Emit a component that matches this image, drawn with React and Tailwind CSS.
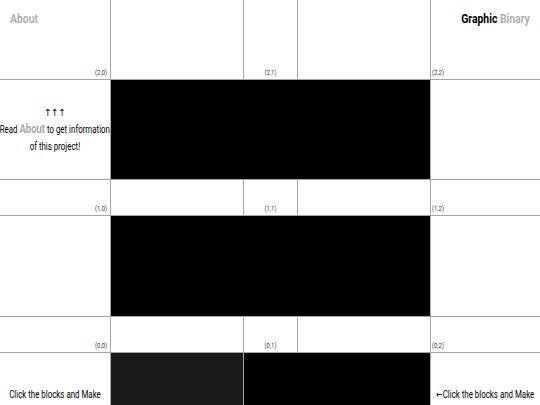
import React from 'react'

const FONT = { fontFamily: 'Roboto, "Liberation Sans", sans-serif' }
const ARROW = { fontFamily: '"DejaVu Sans", sans-serif' }

function Label({ text, align }) {
  const pos = align === 'right' ? 'justify-end pr-[3px]' : align === 'left' ? 'justify-start pl-px' : 'justify-center'
  const origin = align === 'right' ? 'origin-right' : align === 'left' ? 'origin-left' : 'origin-center'
  return (
    <div className={`flex items-end h-full pb-[3px] ${pos}`}>
      <span className={`inline-block scale-x-[0.8] ${origin} text-[7.5px] leading-none text-[#3a3a3a]`}>{text}</span>
    </div>
  )
}

export default function App() {
  return (
    <div
      className="grid gap-px bg-[#a6a6a6] w-[540px] grid-cols-[110px_132px_53px_132px_109px] grid-rows-[79px_99px_35px_100px_35px_79px]"
      style={FONT}
    >
      {/* row 2 */}
      <div className="bg-white relative">
        <div className="absolute left-[10px] top-[9px] origin-left scale-x-[0.8] text-[13px] font-bold text-[#b0b0b0]">About</div>
        <Label text="(2,0)" align="right" />
      </div>
      <div className="bg-white" />
      <div className="bg-white"><Label text="(2,1)" /></div>
      <div className="bg-white" />
      <div className="bg-white relative">
        <div className="absolute right-[10px] top-[9px] origin-right scale-x-[0.8] whitespace-nowrap text-[13px] font-bold">
          <span className="text-black">Graphic</span> <span className="text-[#b0b0b0]">Binary</span>
        </div>
        <Label text="(2,2)" align="left" />
      </div>

      <div className="bg-white flex flex-col items-center justify-center text-[10px] leading-[17px] text-black text-center">
        <div className="text-[10px] scale-x-[0.85]" style={ARROW}>↑↑↑</div>
        <div className="whitespace-nowrap scale-x-[0.79]">
          Read <span className="text-[12px] font-bold text-[#aaaaaa]">About</span> to get information
        </div>
        <div className="scale-x-[0.79]">of this project!</div>
      </div>
      <div className="bg-black col-span-3" />
      <div className="bg-white" />

      {/* row 1 */}
      <div className="bg-white"><Label text="(1,0)" align="right" /></div>
      <div className="bg-white" />
      <div className="bg-white"><Label text="(1,1)" /></div>
      <div className="bg-white" />
      <div className="bg-white"><Label text="(1,2)" align="left" /></div>

      <div className="bg-white" />
      <div className="bg-black col-span-3" />
      <div className="bg-white" />

      {/* row 0 */}
      <div className="bg-white"><Label text="(0,0)" align="right" /></div>
      <div className="bg-white" />
      <div className="bg-white"><Label text="(0,1)" /></div>
      <div className="bg-white" />
      <div className="bg-white"><Label text="(0,2)" align="left" /></div>

      <div className="bg-white flex items-center justify-center pt-1 text-[10px] text-black whitespace-nowrap">
        <span className="inline-block scale-x-[0.79]">Click the blocks and Make</span>
      </div>
      <div className="bg-[#1a1a1a]" />
      <div className="bg-black col-span-2" />
      <div className="bg-white flex items-center justify-center pt-1 text-[10px] text-black whitespace-nowrap">
        <span className="inline-block scale-x-[0.79]"><span style={ARROW}>←</span>Click the blocks and Make</span>
      </div>
    </div>
  )
}
